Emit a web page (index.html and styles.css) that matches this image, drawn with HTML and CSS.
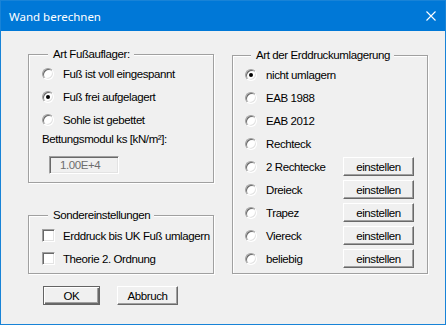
FILE: index.html
```html
<!DOCTYPE html>
<html lang="de">
<head>
  <meta charset="UTF-8" />
  <title>Wand berechnen</title>
  <link rel="stylesheet" href="styles.css">
</head>
<body>
  <div class="window">
    <div class="titlebar">
      <span class="title">Wand berechnen</span>
      <svg class="close" width="10" height="10" viewBox="0 0 10 10">
        <path d="M0.5 0.5 L9.5 9.5 M9.5 0.5 L0.5 9.5" stroke="#fff" stroke-width="1.1" fill="none" />
      </svg>
    </div>

    <div class="content">
      <div class="col left">
        <div class="group g-fuss">
          <span class="legend">Art Fußauflager:</span>
          <div class="row"><span class="radio"></span>Fuß ist voll eingespannt</div>
          <div class="row"><span class="radio checked"></span>Fuß frei aufgelagert</div>
          <div class="row"><span class="radio"></span>Sohle ist gebettet</div>
          <div class="label">Bettungsmodul ks [kN/m²]:</div>
          <div class="field">1.00E+4</div>
        </div>

        <div class="group g-sonder">
          <span class="legend">Sondereinstellungen</span>
          <div class="row"><span class="check"></span>Erddruck bis UK Fuß umlagern</div>
          <div class="row"><span class="check"></span>Theorie 2. Ordnung</div>
        </div>

        <div class="actions">
          <button class="btn default">OK</button>
          <button class="btn">Abbruch</button>
        </div>
      </div>

      <div class="col right">
        <div class="group g-erd">
          <span class="legend">Art der Erddruckumlagerung</span>
          <div class="row"><span class="radio checked"></span>nicht umlagern</div>
          <div class="row"><span class="radio"></span>EAB 1988</div>
          <div class="row"><span class="radio"></span>EAB 2012</div>
          <div class="row"><span class="radio"></span>Rechteck</div>
          <div class="row"><span class="radio"></span>2 Rechtecke<button class="btn set">einstellen</button></div>
          <div class="row"><span class="radio"></span>Dreieck<button class="btn set">einstellen</button></div>
          <div class="row"><span class="radio"></span>Trapez<button class="btn set">einstellen</button></div>
          <div class="row"><span class="radio"></span>Viereck<button class="btn set">einstellen</button></div>
          <div class="row"><span class="radio"></span>beliebig<button class="btn set">einstellen</button></div>
        </div>
      </div>
    </div>
  </div>
</body>
</html>
```

FILE: styles.css
```css
body {
  margin: 0;
  background: #f0f0f0;
  font-family: 'Liberation Sans', Arial, sans-serif;
  font-size: 11.5px;
  letter-spacing: -0.4px;
  color: #000;
}

.window {
  width: 446px;
  height: 325px;
  box-sizing: border-box;
  border: 1px solid #1883d7;
  background: #f0f0f0;
  display: flex;
  flex-direction: column;
}

.titlebar {
  height: 30px;
  flex-shrink: 0;
  background: #0078d7;
  color: #fff;
  display: flex;
  align-items: center;
  justify-content: space-between;
  padding: 0 9px 0 8px;
}

.title {
  font-family: 'Noto Sans', sans-serif;
  font-size: 11.5px;
  letter-spacing: 0;
}

.close {
  display: block;
}

.content {
  display: flex;
  align-items: flex-start;
  gap: 18px;
  padding: 23px 0 0 27px;
}

.col {
  display: flex;
  flex-direction: column;
}

.left {
  width: 186px;
}

.right {
  width: 196px;
  margin-top: 1px;
}

/* group box: etched frame with caption sitting on the top line */
.group {
  box-sizing: border-box;
  border: 1px solid #a0a0a0;
  box-shadow: 1px 1px 0 #fff, inset 1px 1px 0 #fff;
  padding: 0 0 0 13px;
}

.legend {
  display: table;
  height: 14px;
  line-height: 14px;
  margin: -8px 0 1px 6px;
  padding: 0 4px 0 5px;
  background: #f0f0f0;
  white-space: nowrap;
}

.g-fuss {
  height: 129px;
}

.g-sonder {
  margin-top: 32px;
  height: 59px;
}

.g-sonder .legend {
  margin-bottom: 2px;
}

.g-erd {
  height: 219px;
  padding: 0 13px 0 12px;
}

.row {
  height: 23px;
  display: flex;
  align-items: center;
  white-space: nowrap;
}

.radio {
  width: 12px;
  height: 12px;
  box-sizing: border-box;
  border-radius: 50%;
  background: #fff;
  border: 1px solid;
  border-color: #a0a0a0 #fff #fff #a0a0a0;
  box-shadow: inset 1px 1px 0 #696969, inset -1px -1px 0 #e3e3e3;
  margin-right: 9px;
  display: flex;
  align-items: center;
  justify-content: center;
  flex-shrink: 0;
}

.radio.checked::after {
  content: "";
  width: 4px;
  height: 4px;
  border-radius: 50%;
  background: #000;
}

.check {
  width: 13px;
  height: 13px;
  box-sizing: border-box;
  background: #fff;
  border: 1px solid;
  border-color: #a0a0a0 #fff #fff #a0a0a0;
  box-shadow: inset 1px 1px 0 #696969, inset -1px -1px 0 #e3e3e3;
  margin-right: 8px;
  flex-shrink: 0;
}

.label {
  margin-top: 1px;
  line-height: 14px;
  white-space: nowrap;
}

.field {
  margin: 10px 0 0 7px;
  width: 70px;
  height: 18px;
  box-sizing: border-box;
  border: 1px solid;
  border-color: #a0a0a0 #fff #fff #a0a0a0;
  box-shadow: inset 1px 1px 0 #696969, inset -1px -1px 0 #e3e3e3;
  color: #6d6d6d;
  padding-left: 10px;
  line-height: 16px;
}

.btn {
  font: inherit;
  letter-spacing: inherit;
  color: #000;
  background: #f0f0f0;
  border: 1px solid;
  border-color: #fff #696969 #696969 #fff;
  box-shadow: inset -1px -1px 0 #a0a0a0;
  padding: 0;
  height: 19px;
  line-height: 16px;
}

.set {
  margin-left: auto;
  width: 71px;
}

.actions {
  display: flex;
  gap: 17px;
  margin: 12px 0 0 15px;
}

.default {
  width: 57px;
  border: 1px solid #646464;
  box-shadow: inset 1px 1px 0 #fff, inset -1px -1px 0 #696969, inset -2px -2px 0 #a0a0a0;
}

.actions .btn:not(.default) {
  width: 61px;
}
```
